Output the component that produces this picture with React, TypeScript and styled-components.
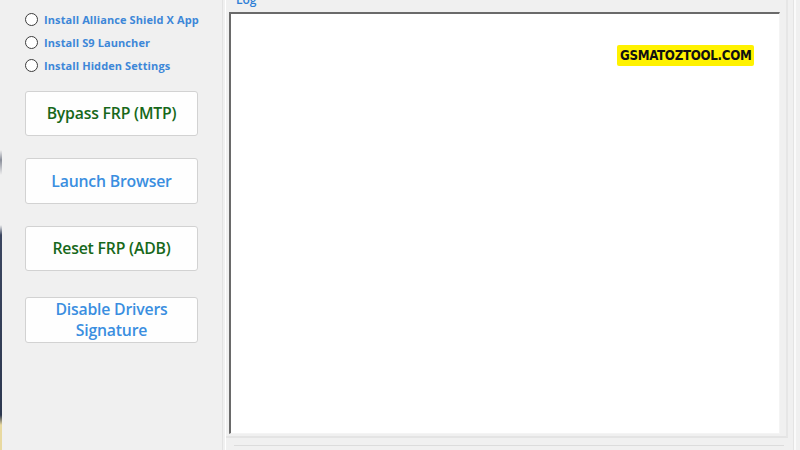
import React from "react";
import styled, { createGlobalStyle } from "styled-components";

const Global = createGlobalStyle`
  html, body { margin: 0; padding: 0; background: #f0f0f0; }
  body { width: 800px; height: 450px; overflow: hidden; font-family: "Open Sans", "Noto Sans", sans-serif; }
`;

const Window = styled.div`
  position: relative;
  display: flex;
  width: 800px;
  height: 450px;
  background: #f0f0f0;
  overflow: hidden;
`;

const DesktopEdge = styled.div`
  position: absolute;
  left: 0;
  top: 0;
  width: 2px;
  height: 450px;
  background: linear-gradient(
    to bottom,
    #f0f0f0 0px,
    #f0f0f0 150px,
    #8a8e9a 160px,
    #f0f0f0 175px,
    #f0f0f0 225px,
    #3b4660 235px,
    #2d3850 415px,
    #e8d9a0 425px,
    #e8d9a0 450px
  );
`;

const LeftPanel = styled.div`
  width: 222px;
  flex: none;
  display: flex;
  flex-direction: column;
  padding: 13px 0 0 25px;
  box-sizing: border-box;
`;

const RadioList = styled.div`
  display: flex;
  flex-direction: column;
  gap: 10px;
  margin-bottom: 19px;
`;

const RadioRow = styled.label`
  display: flex;
  align-items: center;
  gap: 6px;
  height: 13px;
  font-family: "Open Sans", sans-serif;
  font-weight: 700;
  font-size: 11px;
  letter-spacing: 0.1px;
  color: #3d87d8;
  white-space: nowrap;
`;

const RadioCircle = styled.span`
  width: 11px;
  height: 11px;
  border-radius: 50%;
  border: 1px solid #3c3c3c;
  background: #fff;
  flex: none;
`;

const ButtonList = styled.div`
  display: flex;
  flex-direction: column;
`;

const ActionButton = styled.div<{ $tone: "green" | "blue"; $gap: number; $h: number }>`
  width: 173px;
  height: ${(p) => p.$h}px;
  margin-bottom: ${(p) => p.$gap}px;
  box-sizing: border-box;
  display: flex;
  align-items: center;
  justify-content: center;
  text-align: center;
  background: #fefefe;
  border: 1px solid #d2d2d2;
  border-radius: 3px;
  font-family: "Open Sans", sans-serif;
  font-weight: 600;
  font-size: 15.8px;
  letter-spacing: -0.2px;
  line-height: 21px;
  color: ${(p) => (p.$tone === "green" ? "#17681a" : "#3a8ee0")};
`;

const Separator = styled.div`
  width: 2px;
  flex: none;
  background: #f0f0f0;
  border-left: 1px solid #e2e2e2;
  border-right: 1px solid #ffffff;
`;

const RightArea = styled.div`
  flex: 1;
  display: flex;
  flex-direction: column;
`;

const GroupBox = styled.div`
  width: 562px;
  height: 438px;
  box-sizing: border-box;
  border-right: 2px solid #e6e6e6;
  border-bottom: 2px solid #e4e4e4;
  display: flex;
  flex-direction: column;
  padding: 0 0 0 3px;
`;

const GroupLabel = styled.div`
  font-family: "Open Sans", sans-serif;
  font-weight: 600;
  font-size: 12px;
  line-height: 14px;
  color: #2f7fd6;
  margin: -7px 0 5px 7px;
  height: 14px;
`;

const LogBox = styled.div`
  position: relative;
  width: 551px;
  flex: 1;
  box-sizing: border-box;
  background: #ffffff;
  border-top: 2px solid #6a6a6a;
  border-left: 2px solid #6a6a6a;
  border-right: 1px solid #f4f4f4;
  border-bottom: 1px solid #f4f4f4;
  margin-bottom: 2px;
`;

const Watermark = styled.div`
  position: absolute;
  left: 386px;
  top: 31px;
  padding: 0 3px;
  height: 21px;
  line-height: 21px;
  background: #fff200;
  border-radius: 2px;
  color: #111;
  font-family: "DejaVu Sans Condensed", "DejaVu Sans", sans-serif;
  font-weight: 700;
  font-size: 13.2px;
  letter-spacing: -0.3px;
`;

const RightEdge = styled.div`
  width: 14px;
  flex: none;
  display: flex;
  justify-content: flex-start;
  padding-left: 5px;
`;

const EdgeLine = styled.div`
  width: 2px;
  height: 450px;
  background: #fafafa;
  border-left: 1px solid #e4e4e4;
`;

const BottomStub = styled.div`
  margin-left: 8px;
  width: 550px;
  height: 3px;
  border-top: 1px solid #dcdcdc;
  margin-top: 7px;
`;

export default function App() {
  return (
    <>
      <Global />
      <Window>
        <DesktopEdge />
        <LeftPanel>
          <RadioList>
            <RadioRow><RadioCircle />Install Alliance Shield X App</RadioRow>
            <RadioRow><RadioCircle />Install S9 Launcher</RadioRow>
            <RadioRow><RadioCircle />Install Hidden Settings</RadioRow>
          </RadioList>
          <ButtonList>
            <ActionButton $tone="green" $h={45} $gap={22}>Bypass FRP (MTP)</ActionButton>
            <ActionButton $tone="blue" $h={46} $gap={22}>Launch Browser</ActionButton>
            <ActionButton $tone="green" $h={45} $gap={26}>Reset FRP (ADB)</ActionButton>
            <ActionButton $tone="blue" $h={46} $gap={0}>Disable Drivers<br />Signature</ActionButton>
          </ButtonList>
        </LeftPanel>
        <Separator />
        <RightArea>
          <GroupBox>
            <GroupLabel>Log</GroupLabel>
            <LogBox>
              <Watermark>GSMATOZTOOL.COM</Watermark>
            </LogBox>
          </GroupBox>
          <BottomStub />
        </RightArea>
        <RightEdge>
          <EdgeLine />
        </RightEdge>
      </Window>
    </>
  );
}
